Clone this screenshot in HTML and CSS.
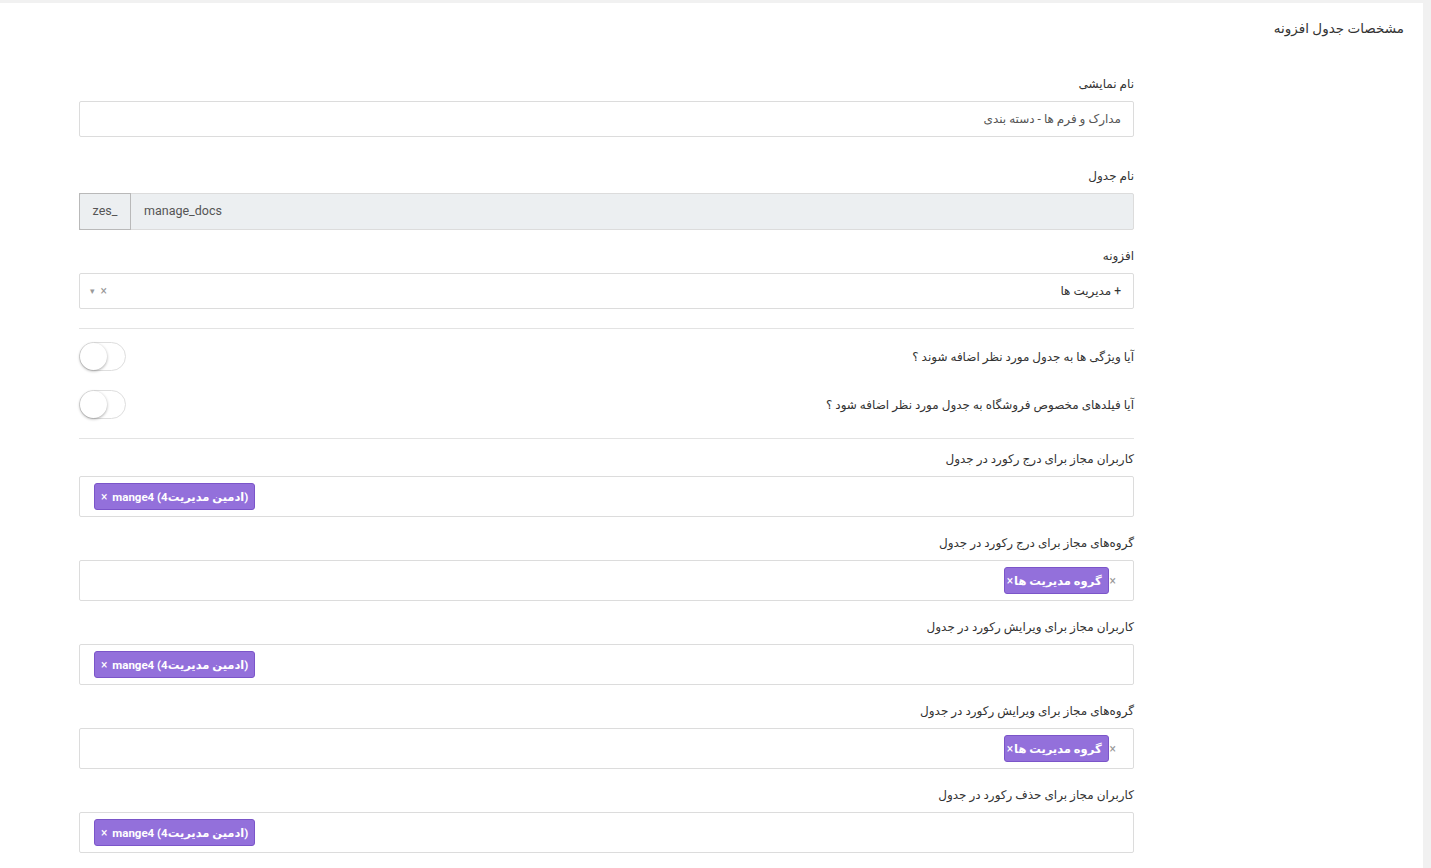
FILE: index.html
```html
<!DOCTYPE html>
<html lang="fa" dir="rtl">
<head>
    <meta charset="UTF-8">
    <meta name="viewport" content="width=device-width, initial-scale=1.0">
    <title>مشخصات جدول افزونه</title>
    <link rel="stylesheet" href="styles.css">
</head>
<body>

    <div class="card">
        <h2 class="card-title">مشخصات جدول افزونه</h2>

        <form class="table-form">
            <!-- Display name -->
            <div class="form-group first">
                <label>نام نمایشی</label>
                <div class="text-input">مدارک و فرم ها - دسته بندی</div>
            </div>

            <!-- Table name with prefix -->
            <div class="form-group">
                <label>نام جدول</label>
                <div class="input-group" dir="ltr">
                    <span class="prefix">zes_</span>
                    <span class="group-value">manage_docs</span>
                </div>
            </div>

            <!-- Plugin select -->
            <div class="form-group">
                <label>افزونه</label>
                <div class="select-box">
                    <span class="select-value">+ مدیریت ها</span>
                    <span class="select-tools" dir="ltr"><span class="arrow">&#9662;</span><span class="clear">&times;</span></span>
                </div>
            </div>

            <hr>

            <div class="switch-row">
                <span>آیا ویژگی ها به جدول مورد نظر اضافه شوند ؟</span>
                <span class="switch"><span class="knob"></span></span>
            </div>
            <div class="switch-row">
                <span>آیا فیلدهای مخصوص فروشگاه به جدول مورد نظر اضافه شود ؟</span>
                <span class="switch"><span class="knob"></span></span>
            </div>

            <hr class="second">

            <!-- Permissions -->
            <div class="form-group">
                <label>کاربران مجاز برای درج رکورد در جدول</label>
                <div class="multi-box" dir="ltr">
                    <span class="chip"><span class="chip-remove">&times;</span> mange4 (ادمین مدیریت4)</span>
                </div>
            </div>

            <div class="form-group">
                <label>گروه‌های مجاز برای درج رکورد در جدول</label>
                <div class="multi-box">
                    <span class="outer-remove">&times;</span>
                    <span class="chip group-chip">گروه مدیریت ها<span class="chip-remove">&times;</span></span>
                </div>
            </div>

            <div class="form-group">
                <label>کاربران مجاز برای ویرایش رکورد در جدول</label>
                <div class="multi-box" dir="ltr">
                    <span class="chip"><span class="chip-remove">&times;</span> mange4 (ادمین مدیریت4)</span>
                </div>
            </div>

            <div class="form-group">
                <label>گروه‌های مجاز برای ویرایش رکورد در جدول</label>
                <div class="multi-box">
                    <span class="outer-remove">&times;</span>
                    <span class="chip group-chip">گروه مدیریت ها<span class="chip-remove">&times;</span></span>
                </div>
            </div>

            <div class="form-group">
                <label>کاربران مجاز برای حذف رکورد در جدول</label>
                <div class="multi-box" dir="ltr">
                    <span class="chip"><span class="chip-remove">&times;</span> mange4 (ادمین مدیریت4)</span>
                </div>
            </div>
        </form>
    </div>

</body>
</html>
```

FILE: styles.css
```css
* {
    box-sizing: border-box;
    margin: 0;
    padding: 0;
}

body {
    font-family: Roboto, "DejaVu Sans", sans-serif;
    font-size: 12px;
    color: #333;
    background: #f1f1f1;
    padding: 3px 8px 0 0;
    min-height: 100vh;
}

.card {
    background: #fff;
    min-height: 865px;
    padding: 15px 19px 20px 0;
}

.card-title {
    font-size: 13.5px;
    font-weight: normal;
    line-height: 20px;
    color: #333;
}

/* Form column */
.table-form {
    width: 1055px;
    margin: 36px 270px 0 0;
}

.form-group {
    margin-bottom: 16px;
}

.form-group.first {
    margin-bottom: 29px;
}

label {
    display: block;
    line-height: 20px;
    margin-bottom: 7px;
    color: #333;
}

.text-input,
.select-box {
    height: 36px;
    border: 1px solid #dcdcdc;
    border-radius: 2px;
    padding: 0 12px;
    display: flex;
    align-items: center;
    color: #555;
}

/* Prefixed table name */
.input-group {
    display: flex;
    height: 37px;
    background: #eceff1;
    border: 1px solid #dcdcdc;
    border-radius: 2px;
    color: #555;
    font-size: 12.5px;
}

.prefix {
    width: 52px;
    margin: -1px 0 -1px -1px;
    border: 1px solid #b9b9b9;
    display: flex;
    align-items: center;
    justify-content: center;
    padding-bottom: 3px;
}

.group-value {
    display: flex;
    align-items: center;
    padding: 0 0 3px 13px;
}

.select-box {
    justify-content: space-between;
    color: #333;
}

.select-tools {
    display: flex;
    align-items: center;
    gap: 6px;
    color: #999;
    font-size: 12px;
    margin-left: -2px;
}

.select-tools .arrow {
    font-size: 9px;
}

hr {
    border: none;
    border-top: 1px solid #e3e3e3;
    margin: 19px 0 13px;
}

hr.second {
    margin: 18px 0 10px;
}

/* Toggle rows */
.switch-row {
    display: flex;
    justify-content: space-between;
    align-items: center;
    height: 29px;
    margin-bottom: 19px;
}

.switch-row:last-of-type {
    margin-bottom: 0;
}

.switch {
    width: 47px;
    height: 29px;
    border: 1px solid #dedede;
    border-radius: 15px;
    display: flex;
    justify-content: flex-end;
    background: #fff;
}

.knob {
    width: 27px;
    height: 27px;
    border-radius: 50%;
    background: #fff;
    box-shadow: 0 1px 3px rgba(0, 0, 0, 0.35);
}

/* Multi select boxes */
.multi-box {
    height: 41px;
    border: 1px solid #dcdcdc;
    border-radius: 2px;
    display: flex;
    align-items: center;
    padding: 0 14px;
}

.multi-box:not([dir]) {
    padding-right: 17px;
}

.chip {
    display: inline-flex;
    align-items: center;
    height: 27px;
    padding: 0 6px;
    background: #9370db;
    border: 1px solid #7b55c9;
    border-radius: 3px;
    color: #fff;
    font-weight: bold;
    font-size: 11.5px;
    white-space: pre;
}

.chip-remove {
    font-weight: normal;
    font-size: 12px;
    margin-right: 2px;
}

.group-chip {
    padding: 0 6px 0 2px;
}

.group-chip .chip-remove {
    margin: 0 1px 0 0;
}

.outer-remove {
    color: #999;
    font-size: 12px;
    margin-left: 1px;
}
```
